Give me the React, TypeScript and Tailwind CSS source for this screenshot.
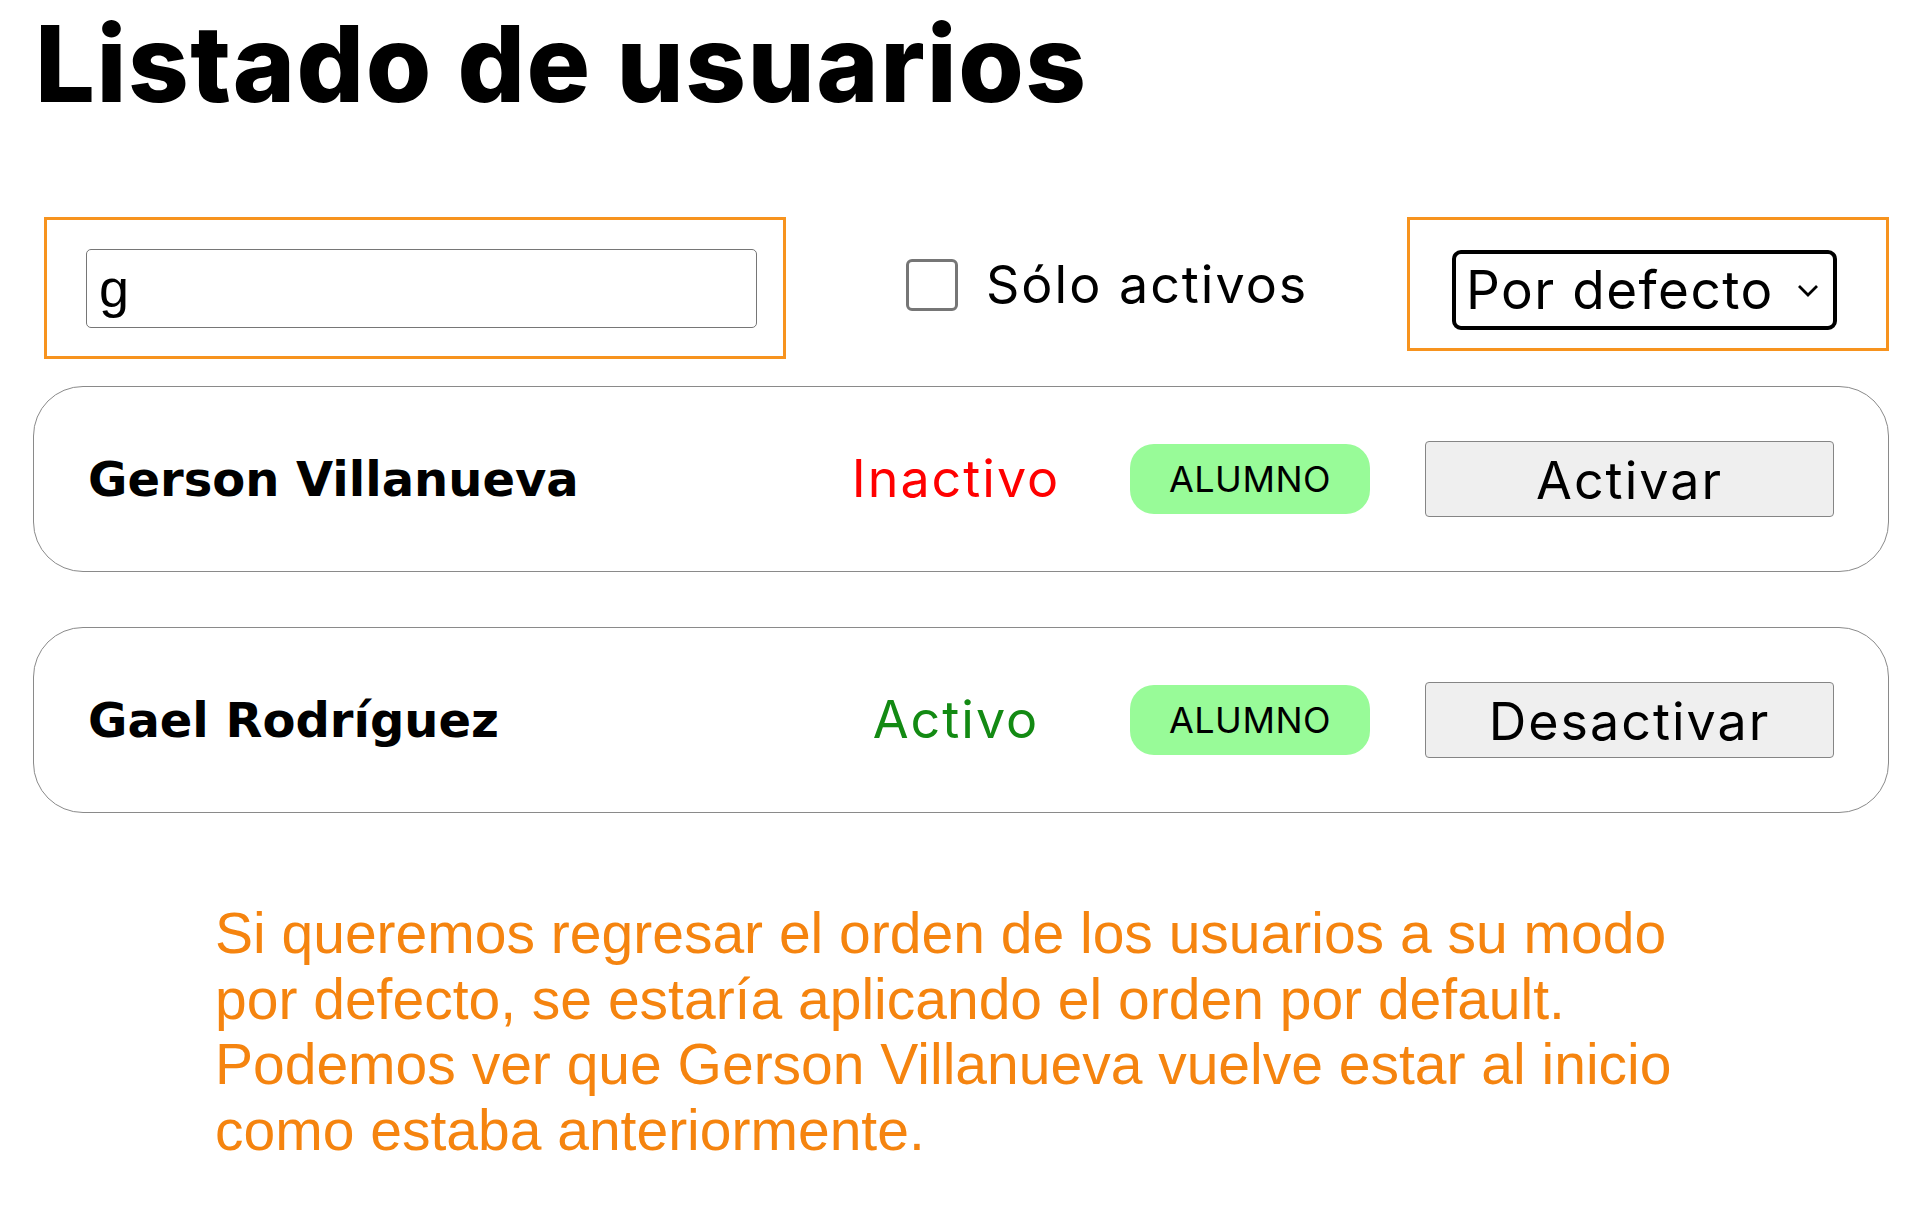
import { useState } from "react";

type User = { id: number; name: string; active: boolean; role: string };

const USERS: User[] = [
  { id: 1, name: "Gerson Villanueva", active: false, role: "ALUMNO" },
  { id: 2, name: "Gael Rodríguez", active: true, role: "ALUMNO" },
];

const geo = "font-['Inter','Noto_Sans',sans-serif]";

function UserRow({ u }: { u: User }) {
  return (
    <div className="flex h-[186px] items-center rounded-[50px] border-[1.5px] border-[#8a8a8a] pl-[54px] pr-[54px]">
      <div className="flex-1 font-['DejaVu_Sans',sans-serif] text-[48px] font-bold text-black">{u.name}</div>
      <div
        className={`w-[260px] text-center text-[52px] tracking-[2px] ${geo} ${
          u.active ? "text-[#138a13]" : "text-[#ff0000]"
        }`}
      >
        {u.active ? "Activo" : "Inactivo"}
      </div>
      <div
        className={`ml-[44px] flex h-[70px] w-[240px] items-center justify-center rounded-[24px] bg-[#98fb98] text-[36px] tracking-[0.5px] text-black ${geo}`}
      >
        {u.role}
      </div>
      <button
        className={`ml-[55px] h-[76px] w-[409px] rounded-[4px] border-[1.5px] border-[#858585] bg-[#efefef] text-[52px] tracking-[2px] text-black ${geo}`}
      >
        {u.active ? "Desactivar" : "Activar"}
      </button>
    </div>
  );
}

export default function App() {
  const [q, setQ] = useState("g");
  const [onlyActive, setOnlyActive] = useState(false);

  return (
    <div className="min-h-[1221px] w-[1920px] bg-white pl-[33px] pr-[31px]">
      <h1
        className={`pl-[2px] text-[106px] leading-[1.21] font-extrabold tracking-[1.5px] text-black ${geo}`}
      >
        Listado de usuarios
      </h1>

      <div className="mt-[89px] flex items-start">
        <div className="ml-[11px] flex h-[142px] w-[742px] items-center border-[3px] border-[#f7931e] pl-[39px]">
          <input
            value={q}
            onChange={(e) => setQ(e.target.value)}
            className="h-[79px] w-[671px] rounded-[5px] border-[1.5px] border-[#767676] px-[12px] font-['Liberation_Sans',Arial,sans-serif] text-[54px] text-black outline-none"
          />
        </div>

        <label className="ml-[120px] mt-[29px] flex cursor-pointer items-center">
          <input
            type="checkbox"
            checked={onlyActive}
            onChange={(e) => setOnlyActive(e.target.checked)}
            className="h-[52px] w-[52px] appearance-none rounded-[6px] border-[3px] border-[#767676] bg-white"
          />
          <span className={`ml-[28px] text-[52px] tracking-[2px] text-black ${geo}`}>Sólo activos</span>
        </label>

        <div className="ml-auto flex h-[134px] w-[482px] items-start border-[3px] border-[#f7931e] pt-[30px] pl-[42px]">
          <div className="relative flex h-[80px] w-[385px] items-center rounded-[9px] border-[4px] border-black pl-[10px]">
            <span className={`text-[53px] tracking-[1.5px] text-black ${geo}`}>Por defecto</span>
            <svg
              className="absolute right-[13px] top-[29px]"
              width="24"
              height="15"
              viewBox="0 0 24 15"
              fill="none"
              stroke="black"
              strokeWidth="2.8"
            >
              <path d="M3 3l9 9 9-9" />
            </svg>
          </div>
        </div>
      </div>

      <div className="mt-[27px] flex flex-col gap-[55px]">
        {USERS.filter((u) => (!onlyActive || u.active) && u.name.toLowerCase().includes(q.toLowerCase())).map((u) => (
          <UserRow key={u.id} u={u} />
        ))}
      </div>

      <p className="mt-[88px] ml-[182px] max-w-[1580px] font-['Liberation_Sans',Arial,sans-serif] text-[57px] leading-[65.5px] text-[#f5840f]">
        Si queremos regresar el orden de los usuarios a su modo
        <br />
        por defecto, se estaría aplicando el orden por default.
        <br />
        Podemos ver que Gerson Villanueva vuelve estar al inicio
        <br />
        como estaba anteriormente.
      </p>
    </div>
  );
}
